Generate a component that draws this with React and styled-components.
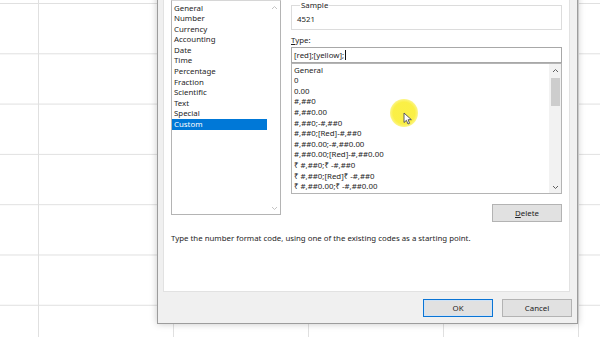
import React from 'react';
import styled, { createGlobalStyle } from 'styled-components';

const GlobalStyle = createGlobalStyle`
  html, body {
    margin: 0;
    padding: 0;
    overflow: hidden;
  }
  body {
    font-family: "Noto Sans", "Open Sans", sans-serif;
    color: #1e1e1e;
  }
`;

const Sheet = styled.div`
  position: relative;
  width: 600px;
  height: 337px;
  overflow: hidden;
  background-color: #fff;
  background-image:
    linear-gradient(to right, #e0e0e0 1px, transparent 1px),
    linear-gradient(to bottom, #e0e0e0 1px, transparent 1px);
  background-size: 135px 100%, 100% 50.3px;
  background-position: 38px 0, 0 3px;
`;

const Dialog = styled.div`
  position: absolute;
  left: 157px;
  top: -22px;
  width: 421px;
  height: 346px;
  box-sizing: border-box;
  border: 1px solid #9c9c9c;
  background: #f0f0f0;
  box-shadow: 0 0 7px rgba(0, 0, 0, 0.22);
  display: flex;
  flex-direction: column;
  font-size: 7.85px;
`;

const Page = styled.div`
  flex: 1;
  margin: 0 7px 0 5px;
  padding: 8px 7px 0 7px;
  background: #fff;
  border: 1px solid #e2e2e2;
  border-top: none;
  display: flex;
  flex-direction: column;
`;

const Columns = styled.div`
  display: grid;
  grid-template-columns: 110px 1fr;
  column-gap: 10px;
  align-items: start;
`;

const Column = styled.div`
  display: flex;
  flex-direction: column;
`;

const Spacer = styled.div`
  height: ${p => p.$h}px;
`;

const Label = styled.div`
  line-height: 13px;
  height: 13px;
  margin-top: ${p => p.$mt || 0}px;
  u { text-decoration: underline; text-underline-offset: 1px; }
`;

const ListBox = styled.div`
  position: relative;
  height: ${p => p.$h}px;
  box-sizing: border-box;
  border: 1px solid #b4b4b4;
  border-top-color: ${p => (p.$flushTop ? '#d6d6d6' : '#b4b4b4')};
  padding: ${p => p.$pt}px 13px 0 0;
  overflow: hidden;
  background: #fff;
`;

const Row = styled.div`
  height: 10.6px;
  line-height: 10.6px;
  padding-left: 2px;
  white-space: nowrap;
  background: ${p => (p.$selected ? '#0078d7' : 'transparent')};
  color: ${p => (p.$selected ? '#fff' : '#1e1e1e')};
`;

const ScrollBar = styled.div`
  position: absolute;
  top: 0;
  right: 0;
  bottom: 0;
  width: 12px;
  background: ${p => (p.$active ? '#f2f2f2' : '#fff')};
  display: flex;
  flex-direction: column;
  align-items: center;
`;

const Arrow = styled.div`
  height: 12px;
  width: 12px;
  display: flex;
  align-items: center;
  justify-content: center;
`;

const Track = styled.div`
  flex: 1;
  width: 100%;
  padding-top: 2px;
  box-sizing: border-box;
`;

const Thumb = styled.div`
  width: 9px;
  height: 28px;
  margin: 0 auto;
  background: #cdcdcd;
`;

const Fieldset = styled.fieldset`
  margin: ${p => p.$mt || 0}px 0 0 0;
  padding: 4px 6px 0 5px;
  height: 30px;
  box-sizing: border-box;
  border: 1px solid #dcdcdc;
  min-width: 0;
  legend {
    padding: 0 1px;
    margin-left: 3px;
    line-height: 10px;
  }
`;

const SampleValue = styled.div`
  line-height: 11px;
`;

const Input = styled.div`
  height: 16px;
  box-sizing: border-box;
  border: 1px solid #a8a8a8;
  padding-left: 2px;
  line-height: 14px;
  display: flex;
  align-items: center;
`;

const Caret = styled.span`
  display: inline-block;
  width: 1px;
  height: 10px;
  background: #111;
  margin-left: 1px;
`;

const ButtonRow = styled.div`
  display: flex;
  justify-content: flex-end;
  gap: ${p => p.$gap || 0}px;
  margin-top: ${p => p.$mt || 0}px;
`;

const Button = styled.div`
  width: 70px;
  height: 18px;
  box-sizing: border-box;
  background: #e1e1e1;
  border: 1px solid ${p => (p.$primary ? '#0a74d4' : '#b3b3b3')};
  box-shadow: ${p => (p.$primary ? 'inset 0 0 0 1px #cfe3f7' : 'none')};
  display: flex;
  align-items: center;
  justify-content: center;
  color: #222;
  u { text-decoration: underline; text-underline-offset: 1px; }
`;

const Description = styled.div`
  margin-top: 11px;
  line-height: 11px;
`;

const Footer = styled.div`
  height: 31px;
  padding: 7px 5px 0 0;
  box-sizing: border-box;
`;

const Highlight = styled.div`
  position: absolute;
  left: 390px;
  top: 99px;
  width: 28px;
  height: 28px;
  border-radius: 50%;
  background: radial-gradient(circle, rgba(250, 238, 50, 0.9) 55%, rgba(250, 240, 90, 0.35) 85%, rgba(255, 255, 255, 0) 100%);
`;

const Pointer = styled.svg`
  position: absolute;
  left: 403px;
  top: 112px;
`;

const Chevron = ({ up, color }) => (
  <svg width="7" height="5" viewBox="0 0 7 5">
    <polyline
      points={up ? '1,4 3.5,1.5 6,4' : '1,1 3.5,3.5 6,1'}
      fill="none"
      stroke={color}
      strokeWidth="1"
    />
  </svg>
);

const categories = [
  'General', 'Number', 'Currency', 'Accounting', 'Date', 'Time',
  'Percentage', 'Fraction', 'Scientific', 'Text', 'Special', 'Custom',
];

const formats = [
  'General',
  '0',
  '0.00',
  '#,##0',
  '#,##0.00',
  '#,##0;-#,##0',
  '#,##0;[Red]-#,##0',
  '#,##0.00;-#,##0.00',
  '#,##0.00;[Red]-#,##0.00',
  '₹ #,##0;₹ -#,##0',
  '₹ #,##0;[Red]₹ -#,##0',
  '₹ #,##0.00;₹ -#,##0.00',
];

const App = () => {
  return (
    <>
      <GlobalStyle />
      <Sheet>
        <Dialog>
          <Page>
            <Columns>
              <Column>
                <Spacer $h={13} />
                <ListBox $h={215} $pt={1.5} $flushTop>
                  {categories.map(c => (
                    <Row key={c} $selected={c === 'Custom'}>{c}</Row>
                  ))}
                  <ScrollBar>
                    <Arrow><Chevron up color="#c4c4c4" /></Arrow>
                    <Track />
                    <Arrow><Chevron color="#c4c4c4" /></Arrow>
                  </ScrollBar>
                </ListBox>
              </Column>
              <Column>
                <Fieldset $mt={13}>
                  <legend>Sample</legend>
                  <SampleValue>4521</SampleValue>
                </Fieldset>
                <Label $mt={4}><u>T</u>ype:</Label>
                <Input>[red];[yellow];<Caret /></Input>
                <ListBox $h={131} $pt={0.7}>
                  {formats.map(f => (
                    <Row key={f}>{f}</Row>
                  ))}
                  <ScrollBar $active>
                    <Arrow><Chevron up color="#606060" /></Arrow>
                    <Track><Thumb /></Track>
                    <Arrow><Chevron color="#606060" /></Arrow>
                  </ScrollBar>
                </ListBox>
                <ButtonRow $mt={10}>
                  <Button><u>D</u>elete</Button>
                </ButtonRow>
              </Column>
            </Columns>
            <Description>
              Type the number format code, using one of the existing codes as a starting point.
            </Description>
          </Page>
          <Footer>
            <ButtonRow $gap={9}>
              <Button $primary>OK</Button>
              <Button>Cancel</Button>
            </ButtonRow>
          </Footer>
        </Dialog>
        <Highlight />
        <Pointer width="10" height="13" viewBox="0 0 10 13">
          <path
            d="M1 1 L1 10.5 L3.4 8.3 L5 12 L6.6 11.3 L5.1 7.7 L8.4 7.7 Z"
            fill="#fff"
            stroke="#4a4a5a"
            strokeWidth="0.9"
            strokeLinejoin="round"
          />
        </Pointer>
      </Sheet>
    </>
  );
};

export default App;
